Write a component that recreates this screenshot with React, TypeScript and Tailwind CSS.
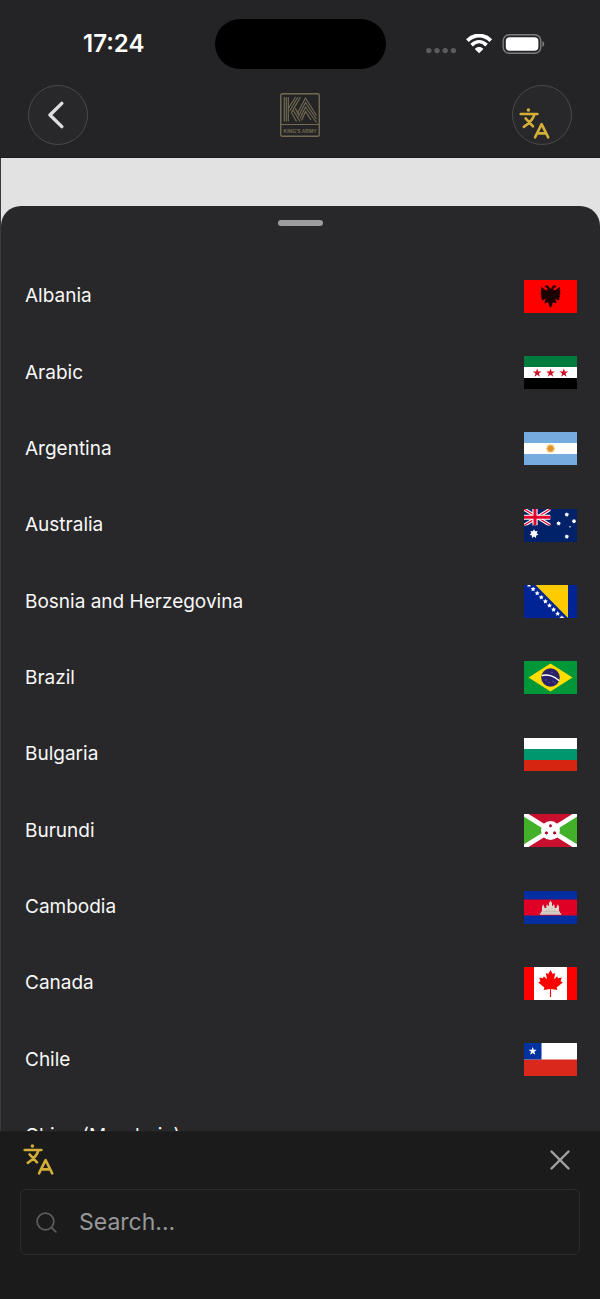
import React from 'react';
import { Search, X } from 'lucide-react';

interface Language {
  name: string;
  flag?: React.ReactNode;
}

// Points of a star centred on (cx, cy)
function starPoints(cx: number, cy: number, r: number, tips = 5, inner = 0.4): string {
  const points: string[] = [];
  for (let i = 0; i < tips * 2; i++) {
    const radius = i % 2 === 0 ? r : r * inner;
    const angle = (Math.PI * i) / tips - Math.PI / 2;
    points.push(`${(cx + radius * Math.cos(angle)).toFixed(2)},${(cy + radius * Math.sin(angle)).toFixed(2)}`);
  }
  return points.join(' ');
}

// All flags are drawn on a 53x33 canvas
const languages: Language[] = [
  {
    name: 'Albania',
    flag: (
      <>
        <rect width="53" height="33" fill="#fe0000" />
        <path
          d="M26.5 9 25.3 7.6 24 5.4 21.6 5.6 20.6 7.2 22.6 7.4 23.6 8.6 23.2 10.4 21 9.8 19 8.2 16.8 6.8 17.4 10 16.4 10.4 17.4 12.6 16.4 13.2 17.6 15 16.6 16 18 17.4 17 19 18.4 19.2 17.8 20.8 20.6 19.6 22.4 18.4 20.8 21 20.6 23.4 23 22.4 24.4 22.6 24.8 25 26.5 28 28.2 25 28.6 22.6 30 22.4 32.4 23.4 32.2 21 30.6 18.4 32.4 19.6 35.2 20.8 34.6 19.2 36 19 35 17.4 36.4 16 35.4 15 36.6 13.2 35.6 12.6 36.6 10.4 35.6 10 36.2 6.8 34 8.2 32 9.8 29.8 10.4 29.4 8.6 30.4 7.4 32.4 7.2 31.4 5.6 29 5.4 27.7 7.6Z"
          fill="#1a0000"
        />
      </>
    ),
  },
  {
    name: 'Arabic',
    flag: (
      <>
        <rect width="53" height="33" fill="#fff" />
        <rect width="53" height="11" fill="#007a3d" />
        <rect y="22" width="53" height="11" fill="#000" />
        <polygon points={starPoints(13.2, 17, 4.6)} fill="#ce1126" />
        <polygon points={starPoints(26.5, 17, 4.6)} fill="#ce1126" />
        <polygon points={starPoints(39.8, 17, 4.6)} fill="#ce1126" />
      </>
    ),
  },
  {
    name: 'Argentina',
    flag: (
      <>
        <rect width="53" height="33" fill="#74acdf" />
        <rect y="11" width="53" height="11" fill="#fff" />
        <polygon points={starPoints(26.5, 16.5, 4.8, 16, 0.7)} fill="#f0b040" />
        <circle cx="26.5" cy="16.5" r="2.6" fill="#dc9232" />
      </>
    ),
  },
  {
    name: 'Australia',
    flag: (
      <>
        <rect width="53" height="33" fill="#012169" />
        <svg width="26.5" height="16.5" viewBox="0 0 26.5 16.5">
          <path d="M0 0 26.5 16.5M26.5 0 0 16.5" stroke="#fff" strokeWidth="3.4" />
          <path d="M0 0 26.5 16.5M26.5 0 0 16.5" stroke="#e4002b" strokeWidth="1.2" />
          <path d="M11 0V16.5M0 8.25H26.5" stroke="#fff" strokeWidth="5.2" />
          <path d="M11 0V16.5M0 8.25H26.5" stroke="#e4002b" strokeWidth="3" />
        </svg>
        <polygon points={starPoints(10, 24.8, 4.6, 7, 0.6)} fill="#fff" />
        <polygon points={starPoints(42.8, 5.6, 2.3, 7, 0.65)} fill="#fff" />
        <polygon points={starPoints(34.6, 14.4, 2.3, 7, 0.65)} fill="#fff" />
        <polygon points={starPoints(50, 12.2, 2.3, 7, 0.65)} fill="#fff" />
        <polygon points={starPoints(42.8, 27.6, 2.3, 7, 0.65)} fill="#fff" />
        <polygon points={starPoints(46, 17.8, 1.3)} fill="#fff" />
      </>
    ),
  },
  {
    name: 'Bosnia and Herzegovina',
    flag: (
      <>
        <rect width="53" height="33" fill="#002395" />
        <path d="M11.5 0H44V33Z" fill="#fecb00" />
        {[0, 1, 2, 3, 4, 5, 6, 7, 8].map((i) => (
          <polygon key={i} points={starPoints(5 + i * 4.1, i * 4.1, 2.6, 5, 0.5)} fill="#fff" />
        ))}
      </>
    ),
  },
  {
    name: 'Brazil',
    flag: (
      <>
        <rect width="53" height="33" fill="#009739" />
        <path d="M26.5 2.5 48.5 16.5 26.5 30.5 4.5 16.5Z" fill="#fedd00" />
        <circle cx="26.5" cy="16.5" r="9.3" fill="#2a2269" />
        <path d="M17.8 14.4C24 13 31 15.2 35.2 19.8" stroke="#fff" strokeWidth="1.5" fill="none" />
        <g fill="#9c96c8">
          <circle cx="22" cy="19" r=".5" />
          <circle cx="25" cy="21.5" r=".5" />
          <circle cx="29" cy="20.5" r=".5" />
          <circle cx="28" cy="11.5" r=".5" />
          <circle cx="31" cy="22" r=".5" />
        </g>
      </>
    ),
  },
  {
    name: 'Bulgaria',
    flag: (
      <>
        <rect width="53" height="33" fill="#fff" />
        <rect y="11" width="53" height="11" fill="#00966e" />
        <rect y="22" width="53" height="11" fill="#d62612" />
      </>
    ),
  },
  {
    name: 'Burundi',
    flag: (
      <>
        <rect width="53" height="33" fill="#c8102e" />
        <path d="M0 0 26.5 16.5 0 33ZM53 0 26.5 16.5 53 33Z" fill="#43b02a" />
        <path d="M0 0 53 33M53 0 0 33" stroke="#fff" strokeWidth="4.8" />
        <circle cx="26.5" cy="16.5" r="9.4" fill="#fff" />
        <polygon points={starPoints(26.5, 11.8, 2, 6, 0.6)} fill="#b01030" />
        <polygon points={starPoints(22.4, 18.9, 2, 6, 0.6)} fill="#b01030" />
        <polygon points={starPoints(30.6, 18.9, 2, 6, 0.6)} fill="#b01030" />
      </>
    ),
  },
  {
    name: 'Cambodia',
    flag: (
      <>
        <rect width="53" height="33" fill="#032ea1" />
        <rect y="8.5" width="53" height="16" fill="#e00025" />
        <path
          d="M15.8 23.8V22.2H17V20.6H18V16L19.2 13.2 20.4 16V17H22.4V14.5L23.4 13.5 24.4 15H25V12L26.5 9.8 28 12V15H28.6L29.6 13.5 30.6 14.5V17H32.6V16L33.8 13.2 35 16V20.6H36V22.2H37.2V23.8Z"
          fill="#ddd8cf"
        />
        <path d="M18 20.6H35M17 22.3H36M22.5 18V20.5M25 17V20.5M28 17V20.5M30.5 18V20.5" stroke="#a39a90" strokeWidth=".4" />
      </>
    ),
  },
  {
    name: 'Canada',
    flag: (
      <>
        <rect width="53" height="33" fill="#fe0000" />
        <rect x="10" width="33" height="33" fill="#fff" />
        <path
          d="M26.5 3 24.3 7 21.8 5.9 23 12.3 19.8 9.2 19 11.2 15.2 10.5 16.4 14.3 14.2 15.4 20.4 20.4 19.6 23 26 22 25.9 30H27.1L27 22 33.4 23 32.6 20.4 38.8 15.4 36.6 14.3 37.8 10.5 34 11.2 33.2 9.2 30 12.3 31.2 5.9 28.7 7Z"
          fill="#fe0000"
        />
      </>
    ),
  },
  {
    name: 'Chile',
    flag: (
      <>
        <rect width="53" height="33" fill="#da291c" />
        <rect width="53" height="16.5" fill="#fff" />
        <rect width="17.5" height="16.5" fill="#0032a0" />
        <polygon points={starPoints(8.7, 8.2, 4.3)} fill="#fff" />
      </>
    ),
  },
  { name: 'China (Mandarin)' },
];

const TranslateIcon: React.FC = () => (
  <svg
    width="32"
    height="32"
    viewBox="0 0 32 32"
    fill="none"
    stroke="#d4af37"
    strokeWidth="2.6"
    strokeLinecap="round"
    strokeLinejoin="round"
    aria-hidden="true"
  >
    <circle cx="9.4" cy="2" r="1.8" fill="#d4af37" stroke="none" />
    <path d="M1.7 6H18.4M15.4 6.6C13.6 12 9.8 15.6 4.8 18.8M6.6 10.4 14 18.4" />
    <path d="M16 29.4 22.6 16.2 29.2 29.4M18.2 25.4H27" />
  </svg>
);

const Logo: React.FC = () => (
  <svg width="40" height="44" viewBox="0 0 40 44" fill="none" stroke="#746c52" aria-label="King's Army">
    <rect x=".75" y=".75" width="38.5" height="42.5" rx="1.5" strokeWidth="1.4" />
    <path d="M1 31.5H39" strokeWidth="1.2" />
    <g strokeWidth="1.1">
      <path d="M4.3 4V28.5M6.3 4V28.5M8.3 4V28.5" />
      <path d="M8.3 15.5 15.5 4M9.6 18 18 4M11.4 19.6 20.5 4" />
      <path d="M11.4 19.6 16.5 28.5M13.4 17.5 20 28.5M15.2 15.4 19 21.8" />
      <path d="M17 21 25.5 5 36.5 22.5M18.4 23.4 25.5 9.5 36.5 26M20 25.6 25.5 14 36.5 29.5M21.5 27.5 25.5 18.5 31 27" />
    </g>
    <text
      x="20"
      y="39.5"
      textAnchor="middle"
      fill="#746c52"
      stroke="none"
      className="font-['Liberation_Sans'] text-[5px] font-bold"
    >
      KING'S ARMY
    </text>
  </svg>
);

const StatusBar: React.FC = () => (
  <div className="grid grid-cols-[1fr_171px_1fr] items-center">
    <div className="pl-[83px] text-2xl font-semibold text-white">17:24</div>
    <div className="h-[50px] rounded-full bg-black" />
    <div className="flex items-center justify-end pr-[55px]">
      <svg width="119" height="20" viewBox="0 0 119 20" aria-hidden="true">
        <g fill="#5b5b5d">
          <circle cx="2.8" cy="16.6" r="2.7" />
          <circle cx="11" cy="16.6" r="2.7" />
          <circle cx="19.2" cy="16.6" r="2.7" />
          <circle cx="27.4" cy="16.6" r="2.7" />
        </g>
        {/* Wifi */}
        <path d="M41.4 6.6C48.2-.2 58-.2 64.8 6.6" fill="none" stroke="#fff" strokeWidth="3.8" />
        <path d="M45.6 11.1C50.2 6.6 56 6.6 60.6 11.1" fill="none" stroke="#fff" strokeWidth="3.6" />
        <path d="M48.8 14.9C51.4 12.3 54.8 12.3 57.4 14.9L53.1 19.2Z" fill="#fff" />
        {/* Battery */}
        <rect x="77.2" y=".8" width="37.6" height="18.4" rx="6" fill="none" stroke="#7c7c7e" strokeWidth="1.4" />
        <rect x="79.8" y="3.2" width="32.6" height="13.6" rx="4" fill="#fff" />
        <path d="M116.4 7C118.8 7.8 118.8 12.2 116.4 13Z" fill="#7c7c7e" />
      </svg>
    </div>
  </div>
);

export default function App() {
  return (
    <div className="flex min-h-screen flex-col bg-[#242426] font-[Inter,sans-serif]">
      <header className="border-b border-[#1c1c1e] pt-[19px] pb-3">
        <StatusBar />
        <div className="mt-4 flex items-center justify-between px-7">
          <button
            type="button"
            aria-label="Back"
            className="flex h-15 w-15 items-center justify-center rounded-full border border-[#4a4a4c] bg-[#28282a]"
          >
            <svg width="20" height="30" viewBox="0 0 20 30" fill="none" stroke="#dedede" strokeWidth="3.4" strokeLinecap="round" strokeLinejoin="round">
              <path d="M13.8 3.4 2 15 13.8 26.6" />
            </svg>
          </button>
          <Logo />
          <button
            type="button"
            aria-label="Language"
            className="flex h-15 w-15 items-end justify-start rounded-full border border-[#4a4a4c] bg-[#28282a] pb-1 pl-[6px]"
          >
            <TranslateIcon />
          </button>
        </div>
      </header>

      <main className="flex flex-1 flex-col border-l border-[#3a3a3c] bg-[#e2e2e2] pt-12">
        <section className="flex flex-1 flex-col rounded-t-[20px] bg-[#28282a]">
          <div className="h-[52px] pt-[14px]">
            <div className="mx-auto h-[6px] w-[45px] rounded-full bg-[#9c9ca0]" />
          </div>
          <ul className="flex flex-1 flex-col">
            {languages.map((language) => (
              <li key={language.name} className="flex min-h-[76px] flex-1">
                <button type="button" className="flex flex-1 items-center justify-between pr-[23px] pl-6">
                  <span className="text-[19px] leading-6 text-[#f8f8f8]">{language.name}</span>
                  {language.flag && (
                    <svg width="53" height="33" viewBox="0 0 53 33" aria-hidden="true">
                      {language.flag}
                    </svg>
                  )}
                </button>
              </li>
            ))}
          </ul>
        </section>
      </main>

      {/* Search bar, always lies over the end of the list */}
      <footer className="sticky bottom-0 -mt-[43px] border-t border-[#202022] bg-[#1b1b1c] px-5 pt-[10px] pb-11">
        <div className="flex items-center justify-between pr-[2px] pl-[3px]">
          <TranslateIcon />
          <button type="button" aria-label="Close" className="flex h-9 w-9 items-center justify-center">
            <X size={34} strokeWidth={1.7} color="#a2a2a4" />
          </button>
        </div>
        <label className="mt-[11px] flex h-[66px] items-center gap-5 rounded-md border border-[#2b2b2c] px-[13px]">
          <Search size={25} strokeWidth={1.7} color="#5c5c5e" className="flex-none" />
          <input
            type="text"
            aria-label="Search"
            placeholder="Search..."
            className="w-full bg-transparent text-[23px] leading-7 text-white outline-none placeholder:text-[#98989a]"
          />
        </label>
      </footer>
    </div>
  );
}
